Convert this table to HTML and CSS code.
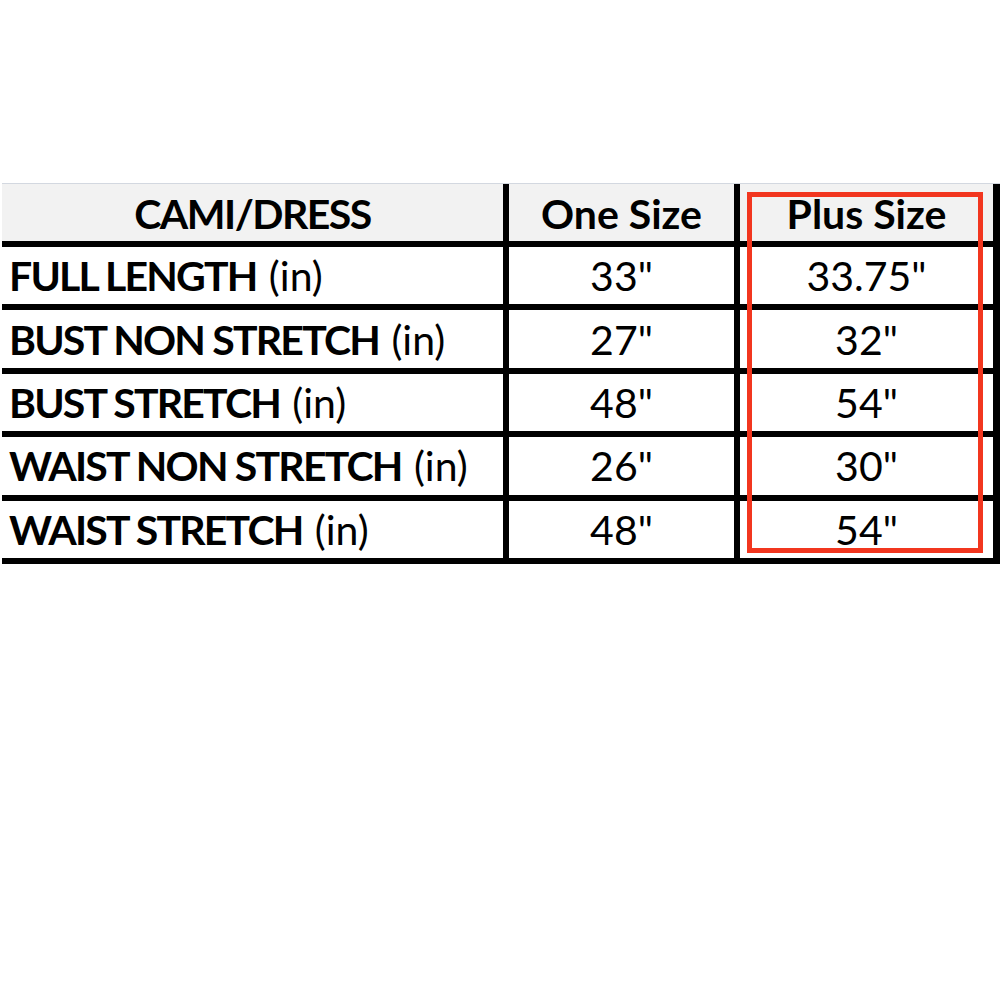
FILE: index.html
```html
<!DOCTYPE html>
<html>
<head>
<meta charset="utf-8">
<link rel="stylesheet" href="styles.css">
</head>
<body>
<div class="sheet">
  <div class="chart">
    <div class="cell head label-head">CAMI/DRESS</div>
    <div class="cell head">One Size</div>
    <div class="cell head">Plus Size</div>

    <div class="cell label"><b>FULL LENGTH</b> (in)</div>
    <div class="cell num">33"</div>
    <div class="cell num">33.75"</div>

    <div class="cell label"><b>BUST NON STRETCH</b> (in)</div>
    <div class="cell num">27"</div>
    <div class="cell num">32"</div>

    <div class="cell label"><b>BUST STRETCH</b> (in)</div>
    <div class="cell num">48"</div>
    <div class="cell num">54"</div>

    <div class="cell label"><b>WAIST NON STRETCH</b> (in)</div>
    <div class="cell num">26"</div>
    <div class="cell num">30"</div>

    <div class="cell label"><b>WAIST STRETCH</b> (in)</div>
    <div class="cell num">48"</div>
    <div class="cell num">54"</div>
  </div>
  <div class="highlight"></div>
</div>
</body>
</html>
```

FILE: styles.css
```css
html, body {
  margin: 0;
  padding: 0;
  background: #ffffff;
}

body {
  width: 1000px;
  height: 1000px;
  overflow: hidden;
  font-family: Lato, "Open Sans", "Liberation Sans", sans-serif;
  color: #000;
}

.sheet {
  position: relative;
  padding-top: 183px;
  padding-left: 2px;
}

.chart {
  display: grid;
  grid-template-columns: 501px 225px 253px;
  grid-template-rows: 57px repeat(5, 57.4px);
  gap: 6px;
  width: fit-content;
  background: #000;
  border-top: 1px solid #d3d8e0;
  padding: 0 7px 6px 0;
}

.cell {
  background: #fff;
  display: flex;
  align-items: center;
  justify-content: center;
  font-size: 41px;
  line-height: 1;
  white-space: nowrap;
}

.head {
  background: #f2f2f2;
  font-weight: 700;
  padding-top: 2px;
}

.label-head {
  letter-spacing: -1.5px;
}

.label {
  justify-content: flex-start;
  padding-left: 7px;
  font-weight: 400;
}

.label b {
  font-weight: 700;
  letter-spacing: -1.8px;
  margin-right: 0.3em;
}

.num {
  font-weight: 400;
}

.highlight {
  position: absolute;
  left: 747px;
  top: 192px;
  width: 226px;
  height: 351px;
  border: 5px solid #f2361f;
  pointer-events: none;
}
```
